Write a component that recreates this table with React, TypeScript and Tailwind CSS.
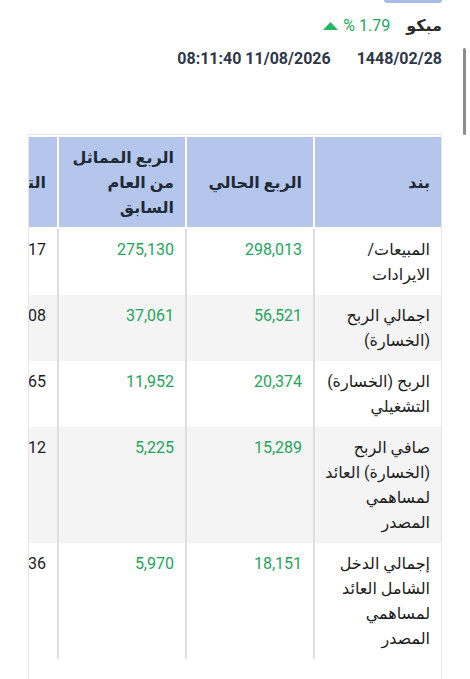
import type { ReactNode } from 'react';

interface StatementRow {
  label: string[];
  current: string;
  previous: string;
  change: string;
}

const rows: StatementRow[] = [
  { label: ['المبيعات/', 'الايرادات'], current: '298,013', previous: '275,130', change: '8.317' },
  { label: ['اجمالي الربح', '(الخسارة)'], current: '56,521', previous: '37,061', change: '52.508' },
  { label: ['الربح (الخسارة)', 'التشغيلي'], current: '20,374', previous: '11,952', change: '70.465' },
  { label: ['صافي الربح', '(الخسارة) العائد', 'لمساهمي', 'المصدر'], current: '15,289', previous: '5,225', change: '192.612' },
  { label: ['إجمالي الدخل', 'الشامل العائد', 'لمساهمي', 'المصدر'], current: '18,151', previous: '5,970', change: '204.036' },
];

function Lines({ lines }: { lines: string[] }) {
  return (
    <>
      {lines.map((l, i) => (
        <div key={i} className="whitespace-nowrap">{l}</div>
      ))}
    </>
  );
}

function HeadCell({ children }: { children: ReactNode }) {
  return (
    <div className="flex w-[128px] shrink-0 items-center border-l-2 border-white bg-[#b4c6eb] px-[11px] pt-[8px] pb-[7px] text-[16px] font-bold leading-[25px] text-[#1f2937]">
      <div>{children}</div>
    </div>
  );
}

function BodyCell({ children, green }: { children: ReactNode; green?: boolean }) {
  return (
    <div
      className={`w-[128px] shrink-0 border-l-2 border-[#dedede] px-[11px] py-[8px] text-[16px] leading-[25px] ${
        green ? 'text-[#22a55b]' : 'text-[#1c1c1c]'
      }`}
    >
      {children}
    </div>
  );
}

export default function App() {
  return (
    <div
      dir="rtl"
      className="relative flex h-[679px] w-[470px] flex-col overflow-hidden bg-white px-[28px]"
      style={{ fontFamily: 'Roboto, "Noto Sans", "DejaVu Sans", sans-serif' }}
    >
      {/* cut-off tab indicator */}
      <div className="flex">
        <div className="h-[3px] w-[58px] rounded-b-sm bg-[#a9bde8]" />
      </div>

      <div className="mt-[12px] flex h-[22px] items-center gap-4">
        <span className="text-[16px] font-semibold text-[#2b2b2b]">مبكو</span>
        <span className="flex items-center gap-[5px] text-[16px] text-[#22a55b]">
          <span dir="ltr">% 1.79</span>
          <svg width="15" height="8" viewBox="0 0 15 8">
            <path d="M7.5 0L15 8H0z" fill="#22b865" />
          </svg>
        </span>
      </div>

      <div className="mt-[11px] flex h-[22px] items-center gap-[26px] text-[16px] font-bold text-[#2d3748]">
        <span dir="ltr">1448/02/28</span>
        <span dir="ltr">08:11:40 11/08/2026</span>
      </div>

      <div className="mt-[64px] flex-1 overflow-hidden border border-b-0 border-[#e6e6e6] pt-[2px]">
        <div className="mb-[2px] flex w-max">
          <HeadCell>بند</HeadCell>
          <HeadCell>الربع الحالي</HeadCell>
          <HeadCell>
            <Lines lines={['الربع المماثل', 'من العام', 'السابق']} />
          </HeadCell>
          <HeadCell>التغير %</HeadCell>
        </div>
        {rows.map((r, i) => (
          <div key={i} className={`flex w-max ${i % 2 === 1 ? 'bg-[#f4f4f5]' : 'bg-white'}`}>
            <BodyCell>
              <Lines lines={r.label} />
            </BodyCell>
            <BodyCell green>{r.current}</BodyCell>
            <BodyCell green>{r.previous}</BodyCell>
            <BodyCell>{r.change}</BodyCell>
          </div>
        ))}
      </div>

      {/* page scrollbar */}
      <div className="absolute right-[4px] top-[48px] h-[87px] w-[3px] rounded-full bg-[#8c8c8c]" />
    </div>
  );
}
